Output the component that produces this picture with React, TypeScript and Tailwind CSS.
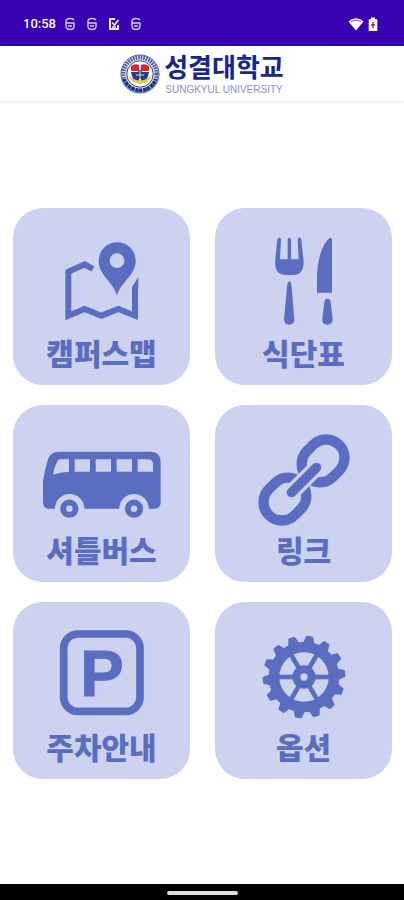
import React from "react";

const INK = "#5b6dc0";
const TILE = "#ccd2ef";

function MapIcon() {
  return (
    <svg viewBox="39 24 531 372" className="w-full" aria-hidden="true">
      <path
        d="M279 207 L254 193 L205 215 V347 L254 327 L304 347 L355 327 L405 347 V248"
        fill="none"
        stroke={INK}
        strokeWidth="18"
      />
      <path d="M286 190 V222 L300 222 V180 Z M392 268 L415 232 V210 L385 230 Z" fill={TILE} />
      <path d="M396 262 L415 231 V262 Z" fill={INK} />
      <path
        fillRule="evenodd"
        d="M351 286 C340 246 296 226 296 182 A55 55 0 0 1 407 182 C407 226 362 246 351 286 Z M351 160 a22 22 0 1 0 0.1 0 Z"
        fill={INK}
      />
    </svg>
  );
}

function MealIcon() {
  return (
    <svg viewBox="39 24 531 372" className="w-full" aria-hidden="true" fill={INK}>
      <path d="M226 118 Q227 113 232 113 Q237 113 237 119 L234 178 H257 V119 Q257 113 262 113 Q267 113 267 119 V178 H290 L287 119 Q287 113 292 113 Q297 113 298 118 L305 186 Q305 225 272 225 H252 Q219 225 219 186 Z" />
      <path d="M256 252 Q258 244 262 244 Q266 244 268 252 L277 358 Q277 374 261 374 Q246 374 246 358 Z" />
      <path d="M390 118 Q390 112 383 114 C358 134 344 188 345 240 V278 H390 Z" />
      <path d="M367 305 Q368 296 376 296 Q385 296 386 305 L392 358 Q392 374 376 374 Q360 374 361 358 Z" />
    </svg>
  );
}

function BusIcon() {
  return (
    <svg viewBox="39 21 531 372" className="w-full" aria-hidden="true">
      <path
        fillRule="evenodd"
        fill={INK}
        d="M176 161 H450 Q482 161 482 193 V313 Q482 332 463 332 H446 A44 44 0 0 0 358 332 H253 A44 44 0 0 0 165 332 H147 Q129 332 129 313 V250 Q134 215 144 184 Q151 161 176 161 Z M180 184 Q174 184 172 190 Q162 209 159 230 Q181 222 207 221 V184 Z M224 184 V221 H270 V184 Z M287 184 V221 H333 V184 Z M350 184 V221 H396 V184 Z M413 184 V221 H459 V198 Q459 184 445 184 Z"
      />
      <circle cx="208" cy="332" r="18.5" fill="none" stroke={INK} strokeWidth="18" />
      <circle cx="402" cy="332" r="18.5" fill="none" stroke={INK} strokeWidth="18" />
    </svg>
  );
}

function LinkIcon() {
  return (
    <svg viewBox="39 21 531 372" className="w-full" aria-hidden="true">
      <g transform="rotate(-45 306 246)" fill="none">
        <rect x="319" y="191" width="136" height="110" rx="55" stroke={INK} strokeWidth="31" />
        <rect x="157" y="191" width="136" height="110" rx="55" stroke={INK} strokeWidth="31" />
        <path d="M257 246 H355" stroke={TILE} strokeWidth="49" strokeLinecap="round" />
        <path d="M253 246 H359" stroke={INK} strokeWidth="29" strokeLinecap="round" />
      </g>
    </svg>
  );
}

function ParkingIcon() {
  return (
    <svg viewBox="39 21 531 372" className="w-full" aria-hidden="true">
      <rect x="191" y="117" width="229" height="232" rx="42" fill="none" stroke={INK} strokeWidth="23" />
      <text
        x="241"
        y="302"
        fontSize="196"
        className="font-['Liberation_Sans',sans-serif] font-bold"
        fill={INK}
        stroke={INK}
        strokeWidth="3"
      >
        P
      </text>
    </svg>
  );
}

const TEETH = Array.from({ length: 14 }, (_, i) => 8 + (i * 360) / 14);
const SPOKES = [0, 60, 120, 180, 240, 300];

function GearIcon() {
  return (
    <svg viewBox="39 21 531 372" className="w-full" aria-hidden="true">
      <g transform="translate(306 246)">
        {TEETH.map((a) => (
          <path
            key={a}
            transform={`rotate(${a})`}
            d="M-18 -98 L-11 -121 Q-10 -124 -7 -124 H7 Q10 -124 11 -121 L18 -98 Z"
            fill={INK}
          />
        ))}
        <circle r="90" fill="none" stroke={INK} strokeWidth="32" />
        {SPOKES.map((a) => (
          <path key={a} transform={`rotate(${a})`} d="M20 0 H82" stroke={INK} strokeWidth="14" />
        ))}
        <circle r="23" fill="none" stroke={INK} strokeWidth="24" />
      </g>
    </svg>
  );
}

function Emblem() {
  return (
    <svg viewBox="0 0 40 40" className="size-10" aria-hidden="true">
      <circle cx="20" cy="20" r="19" fill="#e4e7f4" stroke="#4a5793" strokeWidth="1" />
      <circle cx="20" cy="20" r="16.5" fill="none" stroke="#4a599c" strokeWidth="4" strokeDasharray="1.6 1" />
      <path d="M4 25 A17 17 0 0 0 36 25" fill="none" stroke="#1c2f86" strokeWidth="3.5" strokeDasharray="3 1" />
      <circle cx="20" cy="20" r="13.2" fill="#fff" stroke="#33458f" strokeWidth="1" />
      <path d="M11 12 Q15 9 19 11 V17 H11 Z M21 11 Q25 9 29 12 V17 H21 Z" fill="#dc2430" />
      <path d="M11 18 H19 V29 Q12 27 11 18 Z M21 18 H29 Q28 27 21 29 Z" fill="#243a97" />
      <path d="M8 20 Q10 29 20 30 Q30 29 32 20 L28 24 Q20 29 12 24 Z" fill="#e6cb45" />
      <path d="M15 20 L20 16 L25 20 V25 H15 Z" fill="#243a97" />
      <path d="M16 21 H24 M20 17 V25" stroke="#f0dc70" strokeWidth="1" />
    </svg>
  );
}

function AppGlyph() {
  return (
    <svg viewBox="0 0 12 14" className="h-3.5 w-3" fill="none" stroke="#d5cbf5" strokeWidth="1.4" aria-hidden="true">
      <path d="M10 3 Q9 1.5 6 1.5 Q2 1.5 2 4.5 V6 H10 V9 Q10 12.5 6 12.5 Q2 12.5 2 9 V6 M4 9 H8" />
    </svg>
  );
}

function CheckGlyph() {
  return (
    <svg viewBox="0 0 12 14" className="h-3.5 w-3" aria-hidden="true">
      <path d="M7 2 H2 V12 H10 V8" fill="none" stroke="#f2efff" strokeWidth="2" />
      <path d="M4 5.5 L6.5 8 L10.5 3 M4 10 H8" fill="none" stroke="#f2efff" strokeWidth="1.6" />
    </svg>
  );
}

const TILES = [
  { label: "캠퍼스맵", Icon: MapIcon },
  { label: "식단표", Icon: MealIcon },
  { label: "셔틀버스", Icon: BusIcon },
  { label: "링크", Icon: LinkIcon },
  { label: "주차안내", Icon: ParkingIcon },
  { label: "옵션", Icon: GearIcon },
];

export default function App() {
  return (
    <div className="flex min-h-screen flex-col bg-white font-['Noto_Sans_CJK_KR',sans-serif]">
      <div className="flex h-[46px] items-center border-b border-[#1b0b9e] bg-[#3a00b3] pr-[26px] pl-[23px] pt-0.5 text-white">
        <span className="font-['Roboto',sans-serif] text-[13px] leading-4 font-medium">10:58</span>
        <div className="ml-2 flex gap-[10px]">
          <AppGlyph />
          <AppGlyph />
          <CheckGlyph />
          <AppGlyph />
        </div>
        <div className="ml-auto flex items-center gap-1">
          <svg viewBox="0 0 16 14" className="h-3.5 w-4" aria-hidden="true">
            <path d="M8 13.5 L0.5 4.5 Q8 -2 15.5 4.5 Z" fill="#fff" />
            <path d="M3 4.8 Q8 1.5 13 4.8" fill="none" stroke="#6a43cb" strokeWidth="1" />
          </svg>
          <svg viewBox="0 0 10 14" className="h-3.5 w-2.5" aria-hidden="true">
            <path d="M3 0.5 H7 V2 H8 Q9.3 2 9.3 3.3 V14 H0.7 V3.3 Q0.7 2 2 2 H3 Z" fill="#fff" />
            <path d="M5 5 V11 M3 8 H7" stroke="#5632b8" strokeWidth="1.3" />
          </svg>
        </div>
      </div>

      <header className="flex h-14 items-center justify-center gap-1 border-b border-[#ececec] shadow-[0_1px_2px_rgba(0,0,0,0.08)]">
        <Emblem />
        <div className="flex flex-col items-center">
          <h1 className="text-[26px] leading-8 font-bold text-[#17268c]">성결대학교</h1>
          <p className="font-['Liberation_Sans',sans-serif] text-[10px] leading-4 text-[#8890bd]">
            SUNGKYUL UNIVERSITY
          </p>
        </div>
      </header>

      <main className="flex flex-1 flex-col justify-center pr-3 pl-[13px]">
        <nav className="grid grid-cols-2 gap-x-[25px] gap-y-5">
          {TILES.map(({ label, Icon }) => (
            <button
              key={label}
              type="button"
              className="flex aspect-square cursor-pointer flex-col items-center justify-start rounded-[30px] bg-[#ccd2ef] text-[#5b6dc0]"
            >
              <Icon />
              <span className="text-[30px] leading-10 font-black">{label}</span>
            </button>
          ))}
        </nav>
      </main>

      <div className="flex h-4 items-center justify-center bg-black pt-0.5">
        <div className="h-1 w-[71px] rounded-sm bg-[#dedede]" />
      </div>
    </div>
  );
}
